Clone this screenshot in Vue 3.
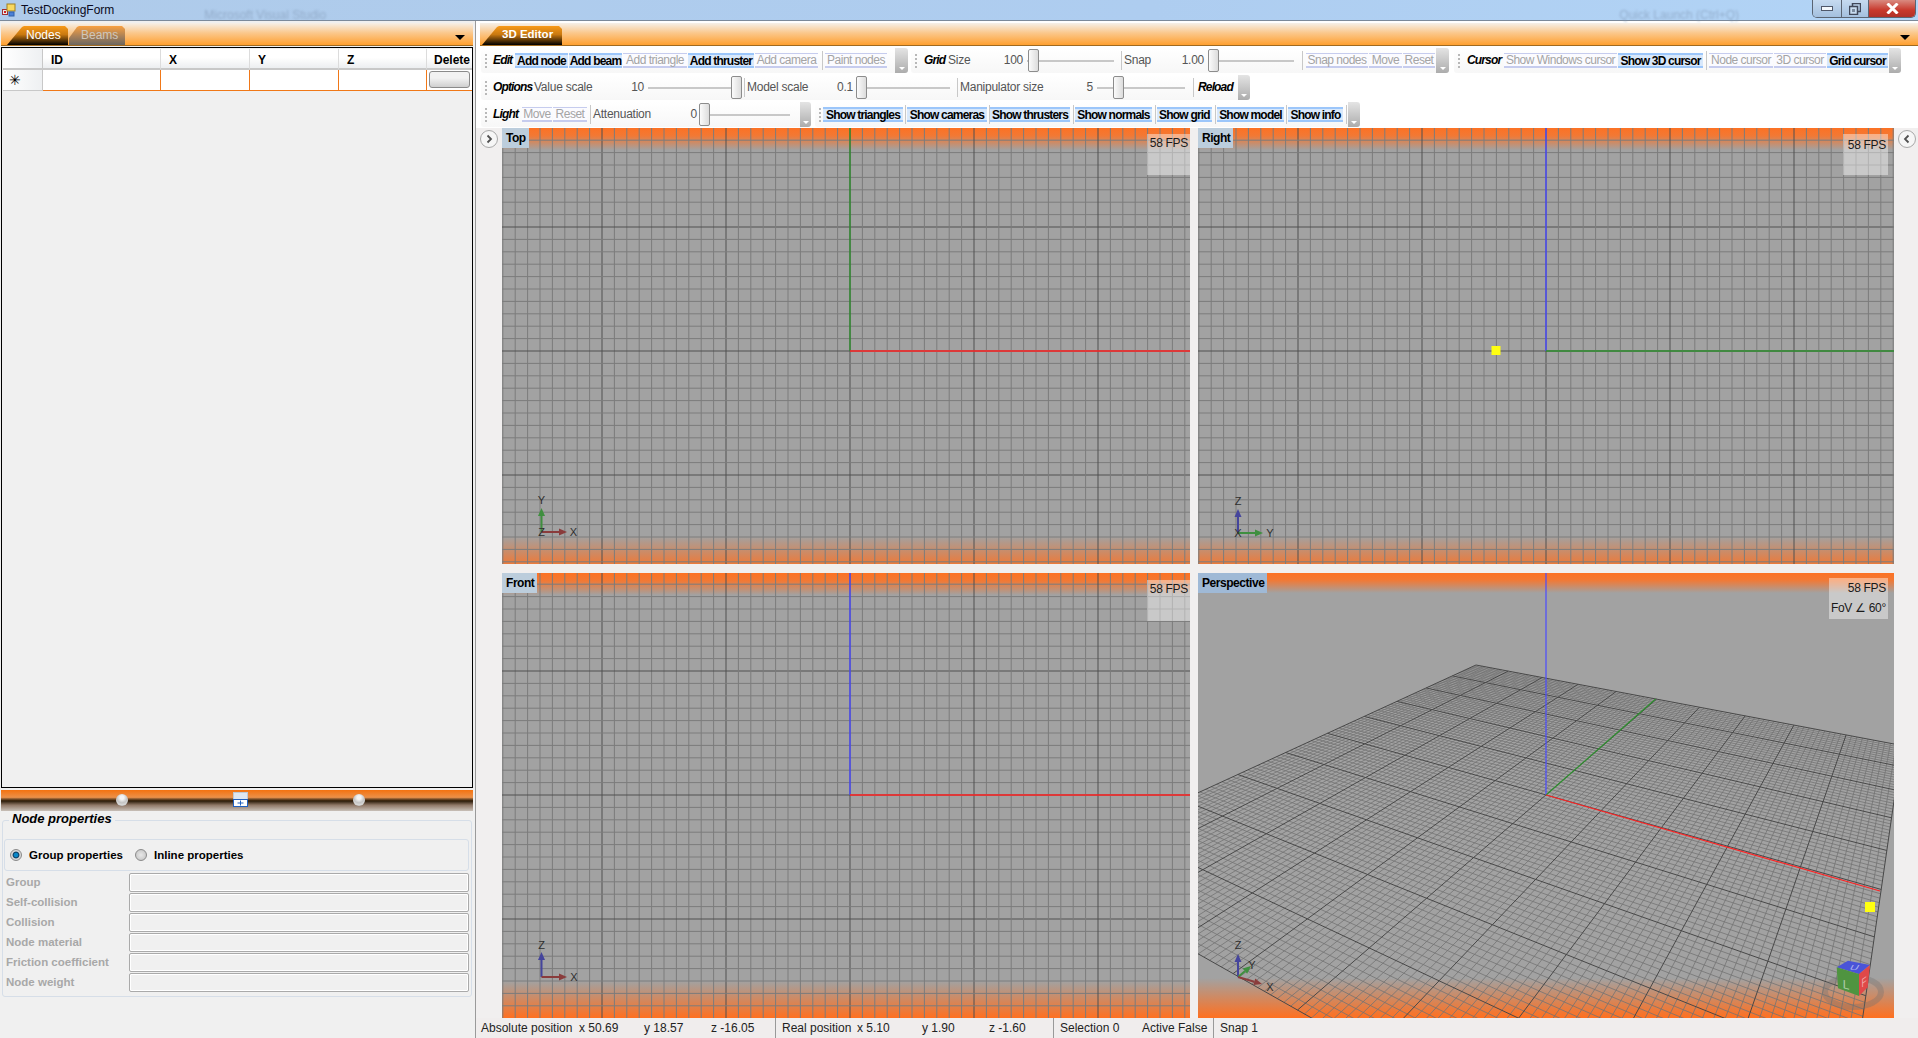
<script setup>
const b = (text, w, on = false) => ({ t: 'btn', text, w, on })
const l = (text, w) => ({ t: 'lbl', text, w })
const v = (text, w) => ({ t: 'val', text, w })
const h = (text, w) => ({ t: 'ttl', text, w })
const g = (w) => ({ t: 'grip', w })
const s = (w = 5) => ({ t: 'sep', w })
const o = (w = 13) => ({ t: 'over', w })
const sp = (w) => ({ t: 'gap', w })
const sl = (w, pos) => ({ t: 'slider', w, pos })

const rows = [
  [
    { ml: 1, items: [g(11), h('Edit', 23), b('Add node', 54, true), b('Add beam', 54, true), b('Add triangle', 65), b('Add thruster', 67, true), b('Add camera', 64), s(6), b('Paint nodes', 63), sp(7), o()] },
    { ml: 3, items: [g(12), h('Grid', 25), l('Size', 53), v('100', 24), sl(94, 3), s(5), l('Snap', 55), v('1.00', 27), sl(93, 2), s(7), b('Snap nodes', 63), b('Move', 34), b('Reset', 33), o()] },
    { ml: 5, items: [g(12), h('Cursor', 38), b('Show Windows cursor', 114), b('Show 3D cursor', 86, true), s(5), b('Node cursor', 65), b('3D cursor', 53), b('Grid cursor', 62, true), o(12)] }
  ],
  [
    { ml: 1, items: [g(11), h('Options', 42), l('Value scale', 96), v('10', 16), sl(96, 85), s(5), l('Model scale', 93), v('0.1', 15), sl(100, 1), s(5), l('Manipulator size', 124), v('5', 11), sl(95, 18), s(7), h('Reload', 41), o(12)] }
  ],
  [
    { ml: 1, items: [g(11), h('Light', 30), b('Move', 31), b('Reset', 35), s(5), l('Attenuation', 99), v('0', 7), sl(96, 0), sp(5), o(11)] },
    { ml: 4, items: [g(8), b('Show triangles', 81, true), s(3), b('Show cameras', 81, true), s(2), b('Show thrusters', 81, true), s(4), b('Show normals', 78, true), s(4), b('Show grid', 56, true), s(4), b('Show model', 68, true), s(3), b('Show info', 56, true), s(4), o(12)] }
  ]
]

const columns = [
  { name: 'ID', w: 118 },
  { name: 'X', w: 89 },
  { name: 'Y', w: 89 },
  { name: 'Z', w: 88 }
]

const props = ['Group', 'Self-collision', 'Collision', 'Node material', 'Friction coefficient', 'Node weight']

const status = [
  { text: 'Absolute position', w: 98 },
  { text: 'x 50.69', w: 65 },
  { text: 'y 18.57', w: 67 },
  { text: 'z -16.05', w: 65, sep: true },
  { text: 'Real position', w: 75 },
  { text: 'x 5.10', w: 65 },
  { text: 'y 1.90', w: 67 },
  { text: 'z -1.60', w: 65, sep: true },
  { text: 'Selection 0', w: 82 },
  { text: 'Active False', w: 72, sep: true },
  { text: 'Snap 1', w: 60 }
]

function ortho(box, ox, oy) {
  const [x, y, w, hh] = box
  const out = []
  const step = 12.4
  for (let i = -60; i <= 60; i++) {
    const px = ox + i * step
    const py = oy + i * step
    const major = i % 10 === 0
    if (px >= x && px <= x + w) out.push({ x1: px, y1: y, x2: px, y2: y + hh, major })
    if (py >= y && py <= y + hh) out.push({ x1: x, y1: py, x2: x + w, y2: py, major })
  }
  return out
}

function perspective() {
  const [x0, y0] = [1476, 665]
  const [x1, y1] = [1902, 745.5]
  const [x2, y2] = [1821, 1306]
  const [x3, y3] = [1041, 865]
  const dx1 = x1 - x2
  const dx2 = x3 - x2
  const sx = x0 - x1 + x2 - x3
  const dy1 = y1 - y2
  const dy2 = y3 - y2
  const sy = y0 - y1 + y2 - y3
  const den = dx1 * dy2 - dx2 * dy1
  const gg = (sx * dy2 - dx2 * sy) / den
  const hh = (dx1 * sy - sx * dy1) / den
  const a = x1 - x0 + gg * x1
  const bb = x3 - x0 + hh * x3
  const d = y1 - y0 + gg * y1
  const e = y3 - y0 + hh * y3
  const map = (u, w) => {
    const q = gg * u + hh * w + 1
    return [(a * u + bb * w + x0) / q, (d * u + e * w + y0) / q]
  }
  const out = []
  for (let i = 0; i <= 100; i++) {
    const t = i / 100
    const major = i % 10 === 0
    const p1 = map(t, 0)
    const p2 = map(t, 1)
    const p3 = map(0, t)
    const p4 = map(1, t)
    out.push({ x1: p1[0], y1: p1[1], x2: p2[0], y2: p2[1], major })
    out.push({ x1: p3[0], y1: p3[1], x2: p4[0], y2: p4[1], major })
  }
  return out.sort((m, n) => Number(m.major) - Number(n.major))
}

const RED = '#ff2424'
const GREEN = '#2f8f2f'
const BLUE = '#4a4aff'
const GR = '#3f8f3f'
const RD = '#8a3c3c'
const BL = '#45459c'

function arrow(x1, y1, x2, y2, color) {
  const len = Math.hypot(x2 - x1, y2 - y1)
  const ux = (x2 - x1) / len
  const uy = (y2 - y1) / len
  const bx = x2 - ux * 8
  const by = y2 - uy * 8
  const pts = `${x2},${y2} ${bx - uy * 3.5},${by + ux * 3.5} ${bx + uy * 3.5},${by - ux * 3.5}`
  return { x1, y1, x2: bx, y2: by, color, pts }
}

const views = [
  {
    id: 'top', name: 'Top', box: [502, 128, 688, 436], lines: ortho([502, 128, 688, 436], 850, 351),
    topH: 22, botH: 28, botOp: 0.8, axisW: 1.4,
    axes: [{ x1: 850, y1: 128, x2: 850, y2: 351, c: GREEN }, { x1: 850, y1: 351, x2: 1190, y2: 351, c: RED }],
    arrows: [arrow(541.5, 532, 541.5, 508, GR), arrow(541.5, 532, 567, 532, RD)],
    labels: [{ t: 'Y', x: 541.5, y: 504 }, { t: 'X', x: 573.5, y: 536 }, { t: 'Z', x: 541.5, y: 536 }],
    squares: [], fpsClass: 'fps-flush', fps: ['58 FPS'], labelClass: 'lab-a'
  },
  {
    id: 'right', name: 'Right', box: [1198, 128, 696, 436], lines: ortho([1198, 128, 696, 436], 1546, 351),
    topH: 22, botH: 28, botOp: 0.8, axisW: 1.4,
    axes: [{ x1: 1546, y1: 128, x2: 1546, y2: 351, c: BLUE }, { x1: 1546, y1: 351, x2: 1894, y2: 351, c: GREEN }],
    arrows: [arrow(1238, 533, 1238, 509, BL), arrow(1238, 533, 1263, 533, GR)],
    labels: [{ t: 'Z', x: 1238, y: 505 }, { t: 'Y', x: 1270, y: 537 }, { t: 'X', x: 1238, y: 537 }],
    squares: [{ x: 1491.5, y: 346, w: 9, h: 9 }], fpsClass: 'fps-in', fps: ['58 FPS'], labelClass: 'lab-a'
  },
  {
    id: 'front', name: 'Front', box: [502, 573, 688, 445], lines: ortho([502, 573, 688, 445], 850, 795),
    topH: 22, botH: 37, botOp: 1, axisW: 1.4,
    axes: [{ x1: 850, y1: 573, x2: 850, y2: 795, c: BLUE }, { x1: 850, y1: 795, x2: 1190, y2: 795, c: RED }],
    arrows: [arrow(541.5, 977, 541.5, 952, BL), arrow(541.5, 977, 567, 977, RD)],
    labels: [{ t: 'Z', x: 541.5, y: 949 }, { t: 'X', x: 574, y: 981 }],
    squares: [], fpsClass: 'fps-flush', fps: ['58 FPS'], labelClass: 'lab-a'
  },
  {
    id: 'persp', name: 'Perspective', box: [1198, 573, 696, 445], lines: perspective(), fine: true,
    topH: 20, botH: 40, botOp: 1, axisW: 1.2,
    axes: [{ x1: 1546, y1: 573, x2: 1546, y2: 795, c: BLUE }, { x1: 1546, y1: 795, x2: 1655.6, y2: 699, c: GREEN }, { x1: 1546, y1: 795, x2: 1880, y2: 891, c: RED }],
    arrows: [arrow(1238, 977, 1238, 954, BL), arrow(1238, 977, 1251, 966, GR), arrow(1238, 977, 1262, 984, RD)],
    labels: [{ t: 'Z', x: 1238, y: 949 }, { t: 'Y', x: 1252, y: 969 }, { t: 'X', x: 1270, y: 991 }],
    squares: [{ x: 1865, y: 902, w: 10, h: 10 }], fpsClass: 'fps-wide', fps: ['58 FPS', 'FoV ∠ 60°'], labelClass: 'lab-b', cube: true
  }
]
</script>

<template>
  <div class="app">
    <header class="title">
      <svg class="ticon" width="14" height="14" viewBox="0 0 14 14">
        <rect x="0.5" y="6.5" width="5" height="5" fill="#e8e8e8" stroke="#a03030" />
        <rect x="2" y="8" width="2" height="2" fill="#d02020" />
        <rect x="5" y="1" width="8" height="7" fill="#f8d860" stroke="#a08020" />
        <rect x="7" y="9" width="5" height="4" fill="#4a80d8" stroke="#3060a8" />
      </svg>
      <span class="ttext">TestDockingForm</span>
      <span class="ghost ghost-a">Microsoft Visual Studio</span>
      <span class="ghost ghost-b">Quick Launch (Ctrl+Q)</span>
      <div class="wbtns">
        <div class="wb wb-min"><svg width="12" height="6" viewBox="0 0 12 6"><rect x="0.5" y="0.5" width="11" height="4" fill="#f4f8fc" stroke="#50586a" /></svg></div>
        <div class="wb wb-max"><svg width="12" height="12" viewBox="0 0 12 12"><rect x="3.5" y="0.5" width="8" height="8" fill="none" stroke="#40485a" stroke-width="1.5" /><rect x="0.5" y="3.5" width="8" height="8" fill="#c8dcf0" stroke="#40485a" stroke-width="1.5" /><rect x="3" y="6" width="3" height="3" fill="#7c8ca0" /></svg></div>
        <div class="wb wb-close"><svg width="13" height="11" viewBox="0 0 13 11"><path d="M1.5 0.5 L11.5 10.5 M11.5 0.5 L1.5 10.5" stroke="#fff" stroke-width="3" /></svg></div>
      </div>
    </header>

    <div class="body">
      <aside class="left">
        <div class="dockhead left-head">
          <div class="tab tab-nodes">Nodes</div>
          <div class="tab tab-beams">Beams</div>
          <span class="menu-arrow"></span>
        </div>
        <div class="table">
          <div class="trow thead">
            <div class="rowhead"></div>
            <div v-for="c in columns" :key="c.name" class="th" :style="{ width: c.w + 'px' }">{{ c.name }}</div>
            <div class="th th-del">Delete</div>
          </div>
          <div class="trow tnew">
            <div class="rowhead star">✳</div>
            <div v-for="c in columns" :key="c.name" class="td" :style="{ width: c.w + 'px' }"></div>
            <div class="td td-del"><div class="delbtn"></div></div>
          </div>
        </div>
        <div class="splitter">
          <span class="knob"></span>
          <svg class="splitbox" width="15" height="15" viewBox="0 0 15 15">
            <rect x="0.5" y="0.5" width="14" height="7" fill="#dfe6f0" stroke="#c0c8d4" />
            <rect x="0.5" y="7.5" width="14" height="7" fill="#fff" stroke="#2060c0" />
            <path d="M4.5 11 H10.5 M7.5 8.5 V13.5" stroke="#2060c0" />
          </svg>
          <span class="knob"></span>
        </div>
        <section class="group">
          <div class="legend">Node properties</div>
          <div class="radios">
            <span class="radio checked"></span><span class="rlabel rl-a">Group properties</span>
            <span class="radio"></span><span class="rlabel">Inline properties</span>
          </div>
          <div v-for="p in props" :key="p" class="prow">
            <span class="plabel">{{ p }}</span>
            <div class="pinput"></div>
          </div>
        </section>
      </aside>

      <main class="right">
        <div class="dockhead right-head">
          <div class="tab tab-editor">3D Editor</div>
          <span class="menu-arrow"></span>
        </div>

        <div class="tools">
          <div v-for="(row, ri) in rows" :key="ri" class="toolrow">
            <div v-for="(strip, si) in row" :key="si" class="strip" :style="{ marginLeft: strip.ml + 'px' }">
              <div v-for="(it, k) in strip.items" :key="k" class="item" :class="it.t" :style="{ width: it.w + 'px' }">
                <span v-if="it.t === 'btn'" class="btnface" :class="{ on: it.on }">{{ it.text }}</span>
                <i v-else-if="it.t === 'slider'" class="thumb" :style="{ marginLeft: it.pos + 'px' }"></i>
                <template v-else-if="it.text">{{ it.text }}</template>
              </div>
            </div>
          </div>
        </div>

        <div class="stage">
          <div class="side">
            <svg width="18" height="18" viewBox="0 0 18 18"><circle cx="9" cy="9" r="8.5" fill="#f6f6f6" stroke="#a8a8a8" /><path d="M7.5 5.5 L11 9 L7.5 12.5" fill="none" stroke="#505050" stroke-width="1.8" /></svg>
          </div>
          <div class="views">
            <div v-for="view in views" :key="view.id" class="viewport">
              <svg class="scene" :class="{ fine: view.fine }" :width="view.box[2]" :height="view.box[3]" :viewBox="view.box.join(' ')">
                <defs>
                  <linearGradient :id="view.id + '-t'" x1="0" y1="0" x2="0" y2="1">
                    <stop offset="0" stop-color="#ff7020" stop-opacity="0.97" />
                    <stop offset="0.35" stop-color="#fb7428" stop-opacity="0.9" />
                    <stop offset="1" stop-color="#ff7020" stop-opacity="0" />
                  </linearGradient>
                  <linearGradient :id="view.id + '-b'" x1="0" y1="1" x2="0" y2="0">
                    <stop offset="0" stop-color="#ff7020" :stop-opacity="view.botOp" />
                    <stop offset="1" stop-color="#ff7020" stop-opacity="0" />
                  </linearGradient>
                </defs>
                <rect :x="view.box[0]" :y="view.box[1]" :width="view.box[2]" :height="view.topH" :fill="`url(#${view.id}-t)`" />
                <rect :x="view.box[0]" :y="view.box[1] + view.box[3] - view.botH" :width="view.box[2]" :height="view.botH" :fill="`url(#${view.id}-b)`" />
                <g>
                  <line v-for="(ln, li) in view.lines" :key="li" :x1="ln.x1" :y1="ln.y1" :x2="ln.x2" :y2="ln.y2" :class="ln.major ? 'major' : 'minor'" />
                </g>
                <line v-for="(ax, ai) in view.axes" :key="'a' + ai" :x1="ax.x1" :y1="ax.y1" :x2="ax.x2" :y2="ax.y2" :stroke="ax.c" :stroke-width="view.axisW" />
                <rect v-for="(sq, qi) in view.squares" :key="'s' + qi" :x="sq.x" :y="sq.y" :width="sq.w" :height="sq.h" fill="#ffff10" />
                <g v-if="view.cube">
                  <ellipse cx="1853" cy="992" rx="28" ry="15" fill="none" stroke="#707070" stroke-opacity="0.35" stroke-width="6" />
                  <polygon points="1836.7,967.3 1848,960.7 1870,965 1859,974" fill="#4a54d8" />
                  <polygon points="1836.7,967.3 1859,974 1859,996 1838,988.3" fill="#4f9440" />
                  <polygon points="1859,974 1870,965 1867.7,987.3 1859,996" fill="#e04848" />
                  <text class="cubetxt" transform="translate(1853 970) skewX(-30) scale(1 .6)">U</text>
                  <text class="cubetxt" transform="translate(1846 989) skewY(15)">L</text>
                  <text class="cubetxt" transform="translate(1864 986) skewY(-35) scale(.7 1)">F</text>
                </g>
                <g v-for="(ar, ri) in view.arrows" :key="'g' + ri">
                  <line :x1="ar.x1" :y1="ar.y1" :x2="ar.x2" :y2="ar.y2" :stroke="ar.color" stroke-width="2" />
                  <polygon :points="ar.pts" :fill="ar.color" />
                </g>
                <text v-for="lb in view.labels" :key="lb.t" class="gizmo" :x="lb.x" :y="lb.y">{{ lb.t }}</text>
              </svg>
              <div class="vlabel" :class="view.labelClass">{{ view.name }}</div>
              <div class="fps" :class="[view.fpsClass, view.id]">
                <div v-for="t in view.fps" :key="t">{{ t }}</div>
              </div>
            </div>
          </div>
          <div class="side side-r">
            <svg width="18" height="18" viewBox="0 0 18 18"><circle cx="9" cy="9" r="8.5" fill="#f6f6f6" stroke="#a8a8a8" /><path d="M10.5 5.5 L7 9 L10.5 12.5" fill="none" stroke="#505050" stroke-width="1.8" /></svg>
          </div>
        </div>

        <footer class="status">
          <span v-for="st in status" :key="st.text" class="stat" :class="{ sep: st.sep }" :style="{ width: st.w + 'px' }">{{ st.text }}</span>
        </footer>
      </main>
    </div>
  </div>
</template>

<style scoped>
.app {
  width: 1918px;
  height: 1038px;
  overflow: hidden;
  display: flex;
  flex-direction: column;
  background: #f0f0f0;
  font-family: "Liberation Sans", Arial, sans-serif;
  font-size: 12px;
  color: #000;
}
.title {
  height: 20px;
  flex: none;
  display: flex;
  align-items: center;
  border-bottom: 1px solid #7c8a9a;
  background: linear-gradient(90deg, #afcbea, #aecdf0 60%, #b2d4f6);
}
.ticon { margin-left: 2px; }
.ttext { margin-left: 5px; color: #0a0a20; }
.ghost {
  color: #7f97b4;
  opacity: 0.6;
  filter: blur(1.2px);
  font-size: 12px;
  white-space: nowrap;
  margin-top: 10px;
}
.ghost-a { margin-left: 90px; width: 1417px; box-sizing: border-box; }
.ghost-b { width: 130px; margin-left: -2px; }
.wbtns {
  position: absolute;
  right: 2px;
  top: 0;
  display: flex;
  height: 18px;
  border: 1px solid #5a6472;
  border-top: 0;
  border-radius: 0 0 5px 5px;
  overflow: hidden;
  box-sizing: border-box;
}
.wb { display: flex; align-items: center; justify-content: center; }
.wb-min { width: 28px; background: linear-gradient(#c6daf0, #a4c0de); border-right: 1px solid #5a6472; }
.wb-max { width: 26px; background: linear-gradient(#c6daf0, #a4c0de); border-right: 1px solid #5a6472; }
.wb-close { width: 46px; background: linear-gradient(#d98a80, #c8382c 60%, #b03028); }

.body { flex: 1; display: flex; min-height: 0; }
.left {
  width: 476px;
  flex: none;
  box-sizing: border-box;
  border-right: 1px solid #9a9a9a;
  padding-top: 2px;
  display: flex;
  flex-direction: column;
}
.right {
  flex: 1;
  min-width: 0;
  padding-top: 2px;
  display: flex;
  flex-direction: column;
  background: #fff;
}
.dockhead {
  height: 23px;
  flex: none;
  box-sizing: border-box;
  display: flex;
  align-items: flex-end;
  position: relative;
  background: linear-gradient(#f6f0e8, #fbc88c 45%, #ffa030);
  border-bottom: 1px solid #a06a20;
}
.left-head { margin-left: 1px; width: 472px; padding-left: 6px; }
.right-head { margin-left: 4px; padding-left: 2px; }
.menu-arrow {
  position: absolute;
  right: 8px;
  top: 12px;
  border: 5px solid transparent;
  border-top: 5px solid #000;
  border-bottom: 0;
}
.tab {
  height: 19px;
  box-sizing: border-box;
  padding-top: 2px;
  white-space: nowrap;
  font-size: 12px;
  clip-path: polygon(0 100%, 15px 1px, 17px 0, calc(100% - 3px) 0, 100% 3px, 100% 100%);
}
.tab-nodes {
  width: 61px;
  padding-left: 19px;
  color: #fff;
  background: linear-gradient(#f89a18, #c87810 45%, #000);
}
.tab-beams {
  width: 56px;
  padding-left: 12px;
  margin-left: 1px;
  color: #cfc7bc;
  background: linear-gradient(#f8a040, #a88058 55%, #6c665e);
  clip-path: polygon(0 100%, 0 12px, 8px 1px, 10px 0, calc(100% - 3px) 0, 100% 3px, 100% 100%);
}
.tab-editor {
  width: 80px;
  padding-left: 20px;
  font-weight: bold;
  font-size: 11.5px;
  color: #fff;
  background: linear-gradient(#f89a18, #c87810 45%, #000);
}

.table {
  margin: 1px 0 0 1px;
  width: 472px;
  height: 741px;
  flex: none;
  box-sizing: border-box;
  border: 1px solid #000;
  padding: 1px 0 0 1px;
  background: #f0f0f0;
}
.trow { display: flex; }
.thead { height: 21px; }
.rowhead {
  width: 40px;
  flex: none;
  box-sizing: border-box;
  background: linear-gradient(90deg, #fff, #eef0f2);
  border-right: 1px solid #c8c8c8;
  border-bottom: 2px solid #c8c8c8;
}
.th {
  flex: none;
  box-sizing: border-box;
  padding: 4px 0 0 8px;
  font-weight: bold;
  background: linear-gradient(#fff 45%, #eceef0);
  border-right: 1px solid #dcdcdc;
  border-bottom: 2px solid #c8c8c8;
}
.th-del { width: 45px; padding-left: 7px; border-right: 0; white-space: nowrap; overflow: hidden; }
.tnew { height: 21px; }
.star {
  font-family: "DejaVu Sans", sans-serif;
  font-size: 14px;
  line-height: 21px;
  padding-left: 6px;
  text-align: left;
  border-bottom: 1px solid #c8c8c8;
}
.td {
  flex: none;
  box-sizing: border-box;
  background: #fff;
  border-right: 1px solid #f07818;
  border-bottom: 1px solid #f07818;
}
.td-del { width: 45px; padding: 1px 2px 1px 2px; border-right: 0; }
.delbtn {
  height: 17px;
  box-sizing: border-box;
  border: 1px solid #8a8a8a;
  border-radius: 3px;
  background: linear-gradient(#f2f2f2 40%, #cfcfcf);
}
.splitter {
  margin: 2px 0 0 1px;
  width: 472px;
  height: 21px;
  flex: none;
  box-sizing: border-box;
  padding: 2px 0 0 6px;
  display: flex;
  justify-content: center;
  align-items: flex-start;
  gap: 105px;
  background: linear-gradient(#f47210, #ec9048 35%, #8a5a30 42%, #2a1a08 52%, #907868 72%, #c8c0b8);
}
.knob {
  width: 12px;
  height: 12px;
  margin-top: 2px;
  border-radius: 50%;
  background: radial-gradient(circle at 50% 30%, #f4f4f4 18%, #c4c4c4 50%, #d8d8d8 70%, #8a8a8a);
}
.group {
  margin: 9px 0 0 2px;
  width: 470px;
  height: 177px;
  box-sizing: border-box;
  position: relative;
  border: 1px solid #d6dee8;
  border-radius: 3px;
  padding: 18px 0 0 1px;
}
.legend {
  position: absolute;
  left: 6px;
  top: -10px;
  padding: 0 3px;
  background: #f0f0f0;
  font-size: 13px;
  font-weight: bold;
  font-style: italic;
  line-height: 16px;
}
.radios {
  width: 465px;
  height: 32px;
  box-sizing: border-box;
  border: 1px solid #d6dee8;
  border-radius: 3px;
  margin-bottom: 1px;
  display: flex;
  align-items: center;
  padding-left: 5px;
  font-weight: bold;
  font-size: 11.5px;
}
.radio {
  width: 12px;
  height: 12px;
  box-sizing: border-box;
  border: 1px solid #8a8a8a;
  border-radius: 50%;
  background: radial-gradient(circle, #e8e8e8, #c0c0c0);
}
.radio.checked { background: radial-gradient(circle, #0a88c8 0 25%, #0a3a60 40%, #d8d8d8 55%); }
.rlabel { margin-left: 7px; }
.rl-a { width: 106px; }
.prow { display: flex; height: 20px; align-items: center; width: 465px; }
.plabel {
  width: 125px;
  padding-left: 2px;
  box-sizing: border-box;
  color: #a8a8a8;
  font-weight: bold;
  font-size: 11.5px;
  white-space: nowrap;
}
.pinput {
  width: 340px;
  height: 19px;
  box-sizing: border-box;
  border: 1px solid #aaa;
  border-radius: 2px;
  box-shadow: inset 0 0 0 1px #fff;
  background: #f0f0f0;
}

.tools {
  height: 82px;
  flex: none;
  box-sizing: border-box;
  padding: 2px 0 0 4px;
  background: #fff;
}
.toolrow { display: flex; height: 25px; margin-bottom: 2px; }
.strip {
  display: flex;
  align-items: center;
  height: 25px;
  border-radius: 3px;
  background: linear-gradient(#fff, #f7f7f7);
}
.item {
  flex: none;
  height: 25px;
  line-height: 25px;
  white-space: nowrap;
  box-sizing: border-box;
  display: flex;
  align-items: center;
}
.lbl, .val { color: #555; letter-spacing: -0.25px; }
.val { justify-content: flex-end; padding-right: 2px; }
.ttl {
  font-weight: bold;
  font-style: italic;
  letter-spacing: -0.85px;
  padding-left: 1px;
}
.grip { justify-content: flex-start; padding-left: 4px; }
.grip::after {
  content: "";
  width: 2px;
  height: 14px;
  background: repeating-linear-gradient(#b8b8b8 0 2px, transparent 2px 4px);
}
.sep { justify-content: center; }
.sep::after { content: ""; width: 1px; height: 19px; background: #c8c8c8; }
.over {
  position: relative;
  border-radius: 0 3px 3px 0;
  background: linear-gradient(#e4e4e4, #acacac);
}
.over::after {
  content: "";
  position: absolute;
  left: 50%;
  bottom: 3px;
  margin-left: -3px;
  border: 3px solid transparent;
  border-top: 3px solid #fff;
  border-bottom: 0;
}
.btnface {
  flex: 1;
  min-width: 0;
  margin-right: 1px;
  height: 15px;
  line-height: 13px;
  box-sizing: border-box;
  text-align: center;
  color: #a4a4a4;
  letter-spacing: -0.5px;
  border-top: 1px solid #c6ccee;
  border-bottom: 2px solid #c6ccee;
  background: #fbfbff;
}
.btnface.on {
  color: #000;
  font-weight: bold;
  letter-spacing: -0.8px;
  border-top: 2px solid #9cc6fa;
  border-bottom: 2px solid #9cc6fa;
  background: #d8e8fb;
  line-height: 12px;
}
.slider {
  background: linear-gradient(#c8c8c8, #c8c8c8) 2px center / calc(100% - 7px) 2px no-repeat;
}
.thumb {
  width: 11px;
  height: 23px;
  box-sizing: border-box;
  border: 1px solid #8c8c8c;
  border-radius: 2px;
  background: linear-gradient(90deg, #fbfbfb, #dcdcdc);
}

.stage { flex: 1; display: flex; min-height: 0; background: #f1efef; }
.side { width: 26px; flex: none; box-sizing: border-box; padding: 2px 0 0 4px; }
.side-r { width: 24px; padding-left: 4px; }
.views {
  display: grid;
  grid-template-columns: 688px 696px;
  grid-template-rows: 436px 445px;
  column-gap: 8px;
  row-gap: 9px;
}
.viewport { position: relative; overflow: hidden; background: #a2a2a2; }
.scene { display: block; }
.minor { stroke: #7c7c7c; stroke-width: 1; }
.major { stroke: #505050; stroke-width: 1; }
.fine .minor { stroke: #747474; stroke-width: 0.8; }
.fine .major { stroke: #484848; stroke-width: 1; }
.gizmo {
  font-size: 11px;
  fill: #2e2e2e;
  text-anchor: middle;
}
.cubetxt { font-size: 12px; fill: #fff; fill-opacity: 0.55; text-anchor: middle; }
.vlabel {
  position: absolute;
  left: 0;
  top: 0;
  height: 20px;
  line-height: 20px;
  padding: 0 3px 0 4px;
  font-weight: bold;
  letter-spacing: -0.45px;
}
.lab-a { background: #bccddc; }
.lab-b { background: #9fb9d6; }
.fps {
  position: absolute;
  top: 6px;
  height: 41px;
  box-sizing: border-box;
  text-align: right;
  padding-right: 2px;
  line-height: 19px;
  letter-spacing: -0.3px;
  white-space: nowrap;
  color: #1a1a1a;
  background: rgba(255, 255, 255, 0.42);
}
.fps-flush { right: 0; width: 43px; }
.fps-in { right: 6px; width: 45px; }
.fps-wide { right: 6px; width: 59px; top: 5px; line-height: 20px; }
.fps.front { top: 7px; }

.status {
  height: 20px;
  flex: none;
  display: flex;
  align-items: center;
  box-sizing: border-box;
  padding-left: 5px;
  background: #f0eded;
  white-space: nowrap;
}
.stat { flex: none; box-sizing: border-box; height: 20px; line-height: 20px; color: #222; }
.stat.sep { border-right: 1px solid #999; margin-right: 6px; }
</style>

<style>
html, body { margin: 0; background: #f0f0f0; }
</style>
